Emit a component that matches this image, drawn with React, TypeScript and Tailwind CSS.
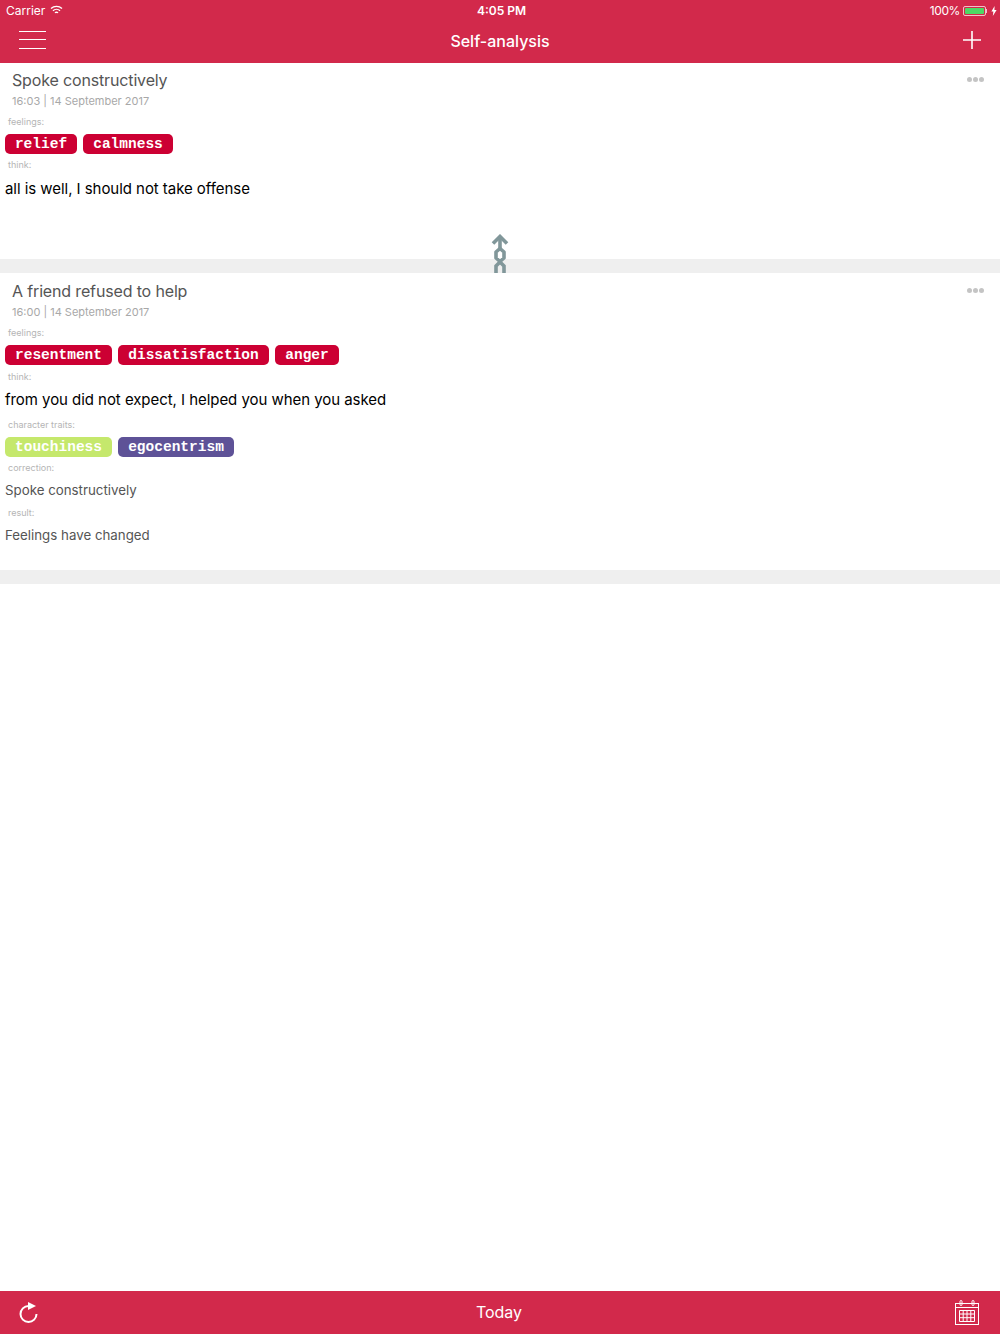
import React from "react";

const font = { fontFamily: "Inter, 'Liberation Sans', sans-serif" };

function Tag({ text, color = "bg-[#cc0033]", w }: { text: string; color?: string; w: string }) {
  return (
    <span className={`${color} ${w} h-5 pt-[1px] rounded-[5px] text-white flex items-center justify-center font-bold text-[14.5px] font-['Liberation_Mono',monospace]`}>
      {text}
    </span>
  );
}

function Label({ children, cls = "" }: { children: React.ReactNode; cls?: string }) {
  return <div className={`pl-2 text-[9px] leading-3 text-[#b5b5b5] ${cls}`}>{children}</div>;
}

function Head({ title, date, top, dots }: { title: string; date: string; top: string; dots: string }) {
  return (
    <>
      <div className={`absolute right-4 ${dots} flex gap-[1px]`}>
        <span className="w-[5px] h-[5px] rounded-full bg-[#c4c4c4]" />
        <span className="w-[5px] h-[5px] rounded-full bg-[#c4c4c4]" />
        <span className="w-[5px] h-[5px] rounded-full bg-[#c4c4c4]" />
      </div>
      <div className={`pl-3 ${top} text-[16px] tracking-[-0.15px] leading-[23px] text-[#555555]`}>{title}</div>
      <div className="pl-3 mt-[2px] text-[11px] leading-[15px] text-[#a8a8a8]">{date}</div>
    </>
  );
}

export default function App() {
  return (
    <div style={font} className="w-[1000px] h-[1334px] flex flex-col bg-white overflow-hidden">
      <header className="h-[63px] shrink-0 bg-[#d2294b] text-white flex flex-col">
        <div className="h-5 flex items-center justify-between pl-[6px] pr-[3px] pt-[1px] text-[12px] relative">
          <div className="flex items-center gap-[5px]">
            <span>Carrier</span>
            <svg width="13" height="10" viewBox="0 0 13 10" fill="none" stroke="white" strokeWidth="1.4" className="-mt-[2px]">
              <path d="M1 3.6a8 8 0 0 1 11 0" />
              <path d="M3 5.8a5 5 0 0 1 7 0" />
              <path d="M5 7.9a2 2 0 0 1 3 0" />
            </svg>
          </div>
          <span className="font-semibold text-[12px] absolute left-[477px]">4:05 PM</span>
          <div className="flex items-center gap-[3px]">
            <span className="tracking-[-0.4px]">100%</span>
            <span className="w-[23px] h-[10px] rounded-[2px] border border-white/70 p-[1px] flex">
              <span className="flex-1 bg-[#4cd964] rounded-[1px]" />
            </span>
            <span className="w-[1px] h-1 bg-white/70 -ml-[3px]" />
            <svg width="6" height="10" viewBox="0 0 6 10" fill="white" className="ml-[1px]">
              <path d="M3.6 0 0.4 5.6h2L1.8 10 5.6 4H3.4z" />
            </svg>
          </div>
        </div>
        <div className="flex-1 flex items-center justify-between pl-[19px] pr-[19px] relative">
          <div className="flex flex-col gap-[7.5px] -mt-[4px]">
            <span className="block w-[27px] h-[1px] bg-white" />
            <span className="block w-[27px] h-[1px] bg-white" />
            <span className="block w-[27px] h-[1px] bg-white" />
          </div>
          <div className="absolute inset-x-0 text-center text-[16px] font-medium -mt-[2px] pointer-events-none">Self-analysis</div>
          <svg width="18" height="18" viewBox="0 0 18 18" stroke="white" strokeWidth="1.6" className="-mt-[4px]">
            <path d="M9 0v18M0 9h18" />
          </svg>
        </div>
      </header>

      <main className="flex-1 flex flex-col">
        <section className="relative h-[196px] shrink-0">
          <Head title="Spoke constructively" date="16:03 | 14 September 2017" top="pt-[6px]" dots="top-[14px]" />
          <Label cls="mt-[7px]">feelings:</Label>
          <div className="flex gap-[6px] pl-[5px] mt-[6px]">
            <Tag text="relief" w="w-[72px]" />
            <Tag text="calmness" w="w-[90px]" />
          </div>
          <Label cls="mt-[5px]">think:</Label>
          <div className="pl-[5px] mt-[6px] text-[15px] tracking-[-0.05px] leading-[24px] text-black">all is well, I should not take offense</div>
          <svg width="20" height="39" viewBox="0 0 20 39" className="absolute left-[490px] top-[171px] z-10" fill="none" stroke="#81979a" strokeWidth="3.6">
            <path d="M3 9.5 10 2.5 17 9.5" />
            <path d="M10 3v11" />
            <path d="M10 14.5 6 18v6l4 3.5 4-3.5v-6z" strokeLinejoin="round" />
            <path d="M10 28 6 32v7M10 28l4 4v7" />
          </svg>
        </section>
        <div className="h-[14px] shrink-0 bg-[#efefef]" />
        <section className="relative h-[297px] shrink-0">
          <Head title="A friend refused to help" date="16:00 | 14 September 2017" top="pt-[7px]" dots="top-[15px]" />
          <Label cls="mt-[7px]">feelings:</Label>
          <div className="flex gap-[6px] pl-[5px] mt-[6px]">
            <Tag text="resentment" w="w-[107px]" />
            <Tag text="dissatisfaction" w="w-[151px]" />
            <Tag text="anger" w="w-[64px]" />
          </div>
          <Label cls="mt-[6px]">think:</Label>
          <div className="pl-[5px] mt-[5px] text-[15px] tracking-[-0.05px] leading-[24px] text-black">from you did not expect, I helped you when you asked</div>
          <Label cls="mt-[7px]">character traits:</Label>
          <div className="flex gap-[6px] pl-[5px] mt-[6px]">
            <Tag text="touchiness" color="bg-[#c5e86c]" w="w-[107px]" />
            <Tag text="egocentrism" color="bg-[#5e5297]" w="w-[116px]" />
          </div>
          <Label cls="mt-[5px]">correction:</Label>
          <div className="pl-[5px] mt-[5px] text-[13.3px] leading-[22px] text-[#555555]">Spoke constructively</div>
          <Label cls="mt-[6px]">result:</Label>
          <div className="pl-[5px] mt-[5px] text-[13.3px] leading-[22px] text-[#555555]">Feelings have changed</div>
        </section>
        <div className="h-[14px] shrink-0 bg-[#efefef]" />
      </main>

      <footer className="h-[43px] shrink-0 bg-[#d2294b] text-white flex items-center justify-between pl-[19px] pr-[21px] relative">
        <svg width="20" height="23" viewBox="0 0 20 23" fill="none" stroke="white" strokeWidth="2">
          <path d="M9.5 5A8 8 0 1 0 17.5 13" />
          <path d="M9 1l8 4-8 4z" fill="white" stroke="none" />
        </svg>
        <div className="absolute inset-x-0 text-center text-[16px] pointer-events-none -ml-[2px] -mt-[2px]">Today</div>
        <svg width="24" height="25" viewBox="0 0 24 25" fill="none" stroke="white" strokeWidth="1" className="-mt-[1px]">
          <rect x="0.5" y="3.5" width="23" height="21" />
          <path d="M0.5 7.5h23" />
          <rect x="5" y="0.5" width="2" height="5" rx="1" />
          <rect x="17" y="0.5" width="2" height="5" rx="1" />
          <path d="M4.5 10.5h15v11h-15zM4.5 14h15M4.5 17.7h15M8.2 10.5v11M12 10.5v11M15.8 10.5v11" />
        </svg>
      </footer>
    </div>
  );
}
